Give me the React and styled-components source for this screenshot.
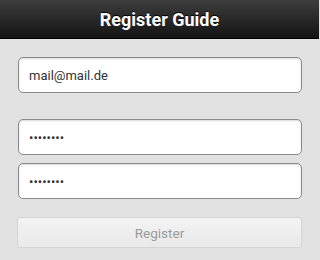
import React from 'react';
import styled, { createGlobalStyle } from 'styled-components';

const GlobalStyle = createGlobalStyle`
  html, body {
    margin: 0;
    padding: 0;
    background: #e1e1e1;
    font-family: Roboto, "Liberation Sans", sans-serif;
  }
`;

const Page = styled('div')`
  width: 319px;
  height: 260px;
  background: #e1e1e1;
  overflow: hidden;
`;

const Header = styled('div')`
  height: 38px;
  display: flex;
  align-items: center;
  justify-content: center;
  background: linear-gradient(#3d3d3d, #141414);
  border-bottom: 1px solid #000;
  color: #fff;
  font-weight: bold;
  font-size: 18px;
  text-shadow: 0 -1px 0 #000;
`;

const Form = styled('div')`
  display: flex;
  flex-direction: column;
  padding: 18px 17px 0 18px;
`;

const Field = styled('input')`
  box-sizing: border-box;
  width: 284px;
  height: 36px;
  margin-bottom: ${(p) => p.gap}px;
  padding: 0 10px;
  border: 1px solid #8a8a8a;
  border-radius: 5px;
  background: #fff;
  box-shadow: inset 0 1px 2px rgba(0, 0, 0, 0.15);
  font-family: Roboto, "Liberation Sans", sans-serif;
  font-size: 13px;
  color: #333;
  outline: none;
`;

const Button = styled('button')`
  box-sizing: border-box;
  width: 285px;
  height: 31px;
  margin-left: -1px;
  border: 1px solid #d4d4d4;
  border-radius: 3px;
  background: linear-gradient(#f3f3f3, #e9e9e9);
  font-family: Roboto, "Liberation Sans", sans-serif;
  font-size: 13.5px;
  color: #9a9a9a;
`;

export default function App() {
  return (
    <Page>
      <GlobalStyle />
      <Header>Register Guide</Header>
      <Form>
        <Field type="text" defaultValue="mail@mail.de" gap={26} />
        <Field type="password" defaultValue="password" gap={8} />
        <Field type="password" defaultValue="password" gap={18} />
        <Button disabled>Register</Button>
      </Form>
    </Page>
  );
}
